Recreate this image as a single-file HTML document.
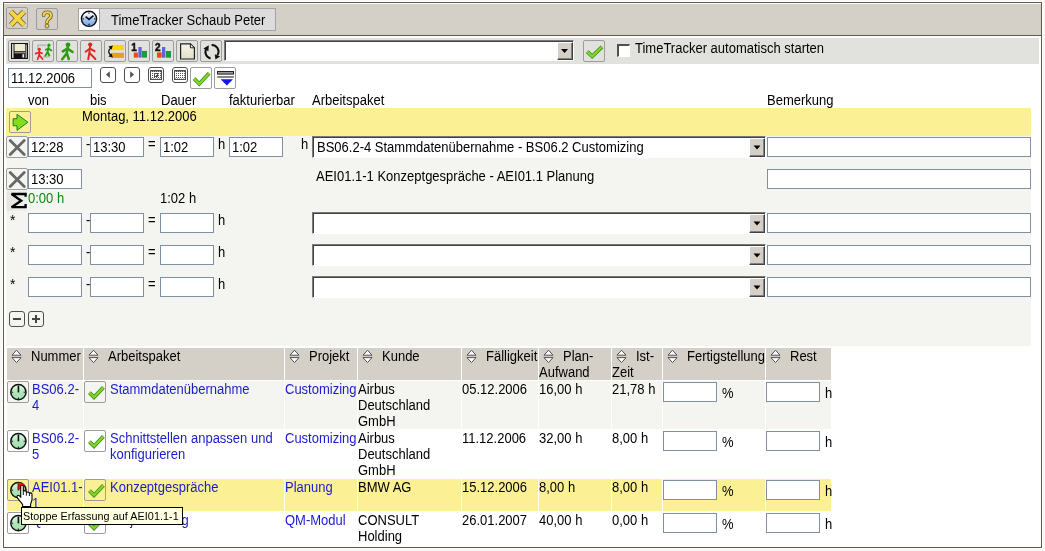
<!DOCTYPE html>
<html><head><meta charset="utf-8"><style>
*{margin:0;padding:0}
html,body{width:1045px;height:551px;overflow:hidden;background:#f7f7f7}
body{position:relative;will-change:transform;font-family:"Liberation Sans",sans-serif;font-size:13px;color:#000}
div,span,svg{position:absolute;box-sizing:border-box}
.t{line-height:16px;white-space:nowrap;font-size:14px;transform:scaleX(0.9286);transform-origin:0 0}
.inp{border:1px solid #7d91a2;background:#fff}
.sel{background:#fff;border:1px solid;border-color:#7a7a7a #fff #fff #7a7a7a;box-shadow:inset 1px 1px 0 #404040}
.dd{background:#d4d0c8;border:1px solid;border-color:#fff #404040 #404040 #fff;box-shadow:inset -1px -1px 0 #808080}
.cb{background:#fff;border-top:2px solid #505050;border-left:2px solid #505050;border-bottom:1px solid #fff;border-right:1px solid #fff}
</style></head>
<body>
<svg width="0" height="0" style="position:absolute"><defs>
<pattern id="dots" x="0" y="0" width="2" height="2" patternUnits="userSpaceOnUse"><rect x="0" y="0" width="1" height="1" fill="#505050"/></pattern>
</defs></svg>
<div style="left:3px;top:2px;width:1039px;height:546px;border:1px solid #5e5a45;background:#fff;box-shadow:0 0 0 1px #fff"></div>
<div style="left:4px;top:4px;width:1037px;height:31px;background:#d4d0c8"></div>
<div style="left:4px;top:35px;width:1037px;height:1px;background:#5e5a45"></div>
<div style="left:6px;top:38px;width:1033px;height:26px;background:#e1e1dd"></div>
<svg style="left:6px;top:7px;" width="22" height="22" viewBox="0 0 22 22"><rect x="0.5" y="0.5" width="21" height="21" rx="1.5" fill="none" stroke="#9c9c9c"/><path d="M4.8 4.6 L18.1 18.1 M18.1 4.6 L4.8 18.1" stroke="#6e6030" stroke-width="5.6"/><path d="M4.8 4.6 L18.1 18.1 M18.1 4.6 L4.8 18.1" stroke="#f6d63c" stroke-width="4"/></svg>
<svg style="left:36px;top:8px;" width="22" height="22" viewBox="0 0 22 22"><rect x="0.5" y="0.5" width="21" height="21" rx="1.5" fill="none" stroke="#9c9c9c"/><g fill="none" stroke-linecap="round" stroke-linejoin="round"><path d="M7.6 7.4 Q7.6 4.2 11.2 4.2 Q15 4.2 15 7.6 Q15 9.8 12.6 11.2 Q11 12.2 11 14.6" stroke="#6e6030" stroke-width="3.6"/><path d="M7.6 7.4 Q7.6 4.2 11.2 4.2 Q15 4.2 15 7.6 Q15 9.8 12.6 11.2 Q11 12.2 11 14.6" stroke="#f6d63c" stroke-width="2"/></g><circle cx="11" cy="18" r="2" fill="#f6d63c" stroke="#6e6030" stroke-width="0.9"/></svg>
<div style="left:78px;top:8px;width:198px;height:23px;border:1px solid #a4a4a4;background:#dcdcdc"></div>
<div style="left:79px;top:9px;width:21px;height:21px;background:#fff;border-right:1px solid #a4a4a4"></div>
<svg style="left:79px;top:9px;" width="21" height="21" viewBox="0 0 21 21"><defs><linearGradient id="cg" x1="0" y1="0" x2="0" y2="1"><stop offset="0.15" stop-color="#fbfdff"/><stop offset="0.55" stop-color="#a8c8f4"/><stop offset="1" stop-color="#6a9eea"/></linearGradient></defs><circle cx="10" cy="9.8" r="7.6" fill="url(#cg)" stroke="#111" stroke-width="1.4"/><path d="M6.6 7.6 L10 10.4 L14.4 6.6" fill="none" stroke="#111" stroke-width="1.7"/><path d="M10 3.4 V4.8 M10 14.8 V16.2 M3.6 9.8 H5 M15 9.8 H16.4" stroke="#222" stroke-width="1.3"/></svg>
<span class="t" style="left:111px;top:12px;">TimeTracker Schaub Peter</span>
<svg style="left:8px;top:40px;" width="22" height="22" viewBox="0 0 22 22"><rect x="0.5" y="0.5" width="21" height="21" rx="1.5" fill="none" stroke="#9c9c9c"/><rect x="3" y="3" width="17" height="16" fill="#111"/><rect x="4" y="4" width="1.6" height="14" fill="#cfcfc4"/><rect x="17.6" y="4.5" width="1.2" height="13.5" fill="#c8c8b8"/><rect x="6.5" y="4" width="10.5" height="7.2" fill="#f0ecd2"/><rect x="6.5" y="12.3" width="10.5" height="1" fill="#bdbdb0"/><rect x="14.4" y="14.2" width="1.8" height="3.4" fill="#e8e8e8"/></svg>
<svg style="left:32px;top:40px;" width="22" height="22" viewBox="0 0 22 22"><rect x="0.5" y="0.5" width="21" height="21" rx="1.5" fill="none" stroke="#9c9c9c"/><path d="M6 10 V5.3 H14.2 M10.8 16.8 H16.2 V12.5" stroke="#c0c0c0" stroke-width="2" fill="none"/><g fill="none" stroke="#2a9a10" stroke-width="1.7" stroke-linecap="round" stroke-linejoin="round"><path d="M16.6 7 L15.6 12"/><path d="M15.6 12 L13.3 15.8 M15.6 12 L17.4 15.6"/><path d="M13.8 9.8 L16.4 8.6 L19.4 10.4"/></g><circle cx="16.9" cy="5.2" r="1.6" fill="#2a9a10"/><g fill="none" stroke="#e02828" stroke-width="1.7" stroke-linecap="round" stroke-linejoin="round"><path d="M7.3 11 L7.2 15"/><path d="M7.2 15 L5.6 19.2 M7.2 15 L10.6 19"/><path d="M3.6 13.6 L7.3 12.2 L10 13.4"/></g><circle cx="7.3" cy="9.3" r="1.6" fill="#e02828"/></svg>
<svg style="left:56px;top:40px;" width="22" height="22" viewBox="0 0 22 22"><rect x="0.5" y="0.5" width="21" height="21" rx="1.5" fill="none" stroke="#9c9c9c"/><g fill="none" stroke="#2f9a12" stroke-width="2.5" stroke-linecap="round" stroke-linejoin="round"><path d="M11.8 7 L10.8 13.2"/><path d="M10.8 13.2 L6.2 19.2 M10.8 13.2 L12.8 19"/><path d="M6.8 11.4 L11.4 8.6 L16.6 12"/></g><circle cx="12" cy="4.8" r="2.4" fill="#2f9a12"/></svg>
<svg style="left:80px;top:40px;" width="22" height="22" viewBox="0 0 22 22"><rect x="0.5" y="0.5" width="21" height="21" rx="1.5" fill="none" stroke="#9c9c9c"/><g fill="none" stroke="#e02424" stroke-width="1.9" stroke-linecap="round" stroke-linejoin="round"><path d="M10 6.5 L9.4 13"/><path d="M9.4 13 L8.2 19.3 M9.4 13 L12 15.5 L15.4 19"/><path d="M5.6 11.8 L10 8.6 L14.6 11.2"/></g><circle cx="10.2" cy="4.6" r="2.1" fill="#e02424"/></svg>
<svg style="left:104px;top:40px;" width="22" height="22" viewBox="0 0 22 22"><rect x="0.5" y="0.5" width="21" height="21" rx="1.5" fill="none" stroke="#9c9c9c"/><rect x="7.8" y="4.9" width="12.2" height="5.3" fill="#f8d800"/><rect x="7.8" y="12.8" width="12.2" height="5.1" fill="#daa424"/><path d="M6.8 8 Q2.6 11.5 6.8 15" fill="none" stroke="#111" stroke-width="1.3"/><path d="M4.4 6.4 L8.8 5.6 L7.6 9.8 Z M4.4 16.6 L8.8 17.4 L7.6 13.2 Z" fill="#111"/></svg>
<svg style="left:128px;top:40px;" width="22" height="22" viewBox="0 0 22 22"><rect x="0.5" y="0.5" width="21" height="21" rx="1.5" fill="none" stroke="#9c9c9c"/><text x="3.2" y="11.2" font-family="Liberation Sans" font-weight="bold" font-size="10" fill="#111" stroke="#111" stroke-width="0.5">1</text><rect x="5.8" y="12.6" width="4.1" height="5" fill="#f04a10"/><rect x="10.4" y="7" width="3.3" height="10.6" fill="#6a5ee0"/><rect x="14" y="10.9" width="5" height="6.7" fill="#1e9a3c"/></svg>
<svg style="left:152px;top:40px;" width="22" height="22" viewBox="0 0 22 22"><rect x="0.5" y="0.5" width="21" height="21" rx="1.5" fill="none" stroke="#9c9c9c"/><text x="3" y="11.2" font-family="Liberation Sans" font-weight="bold" font-size="10" fill="#111" stroke="#111" stroke-width="0.5">2</text><rect x="5" y="12.4" width="4.7" height="5.3" fill="#f04a10"/><rect x="10" y="7" width="3.3" height="10.7" fill="#6a5ee0"/><rect x="13.8" y="11" width="5.2" height="6.7" fill="#1e9a3c"/></svg>
<svg style="left:176px;top:40px;" width="22" height="22" viewBox="0 0 22 22"><rect x="0.5" y="0.5" width="21" height="21" rx="1.5" fill="none" stroke="#9c9c9c"/><defs><linearGradient id="dg" x1="0" y1="0" x2="0" y2="1"><stop offset="0" stop-color="#f6f4e8"/><stop offset="1" stop-color="#e2dec6"/></linearGradient></defs><path d="M4.6 3.8 H14.4 L18.4 7.8 V19 H4.6 Z" fill="url(#dg)" stroke="#222" stroke-width="1.2"/><path d="M14.4 3.8 V7.8 H18.4 Z" fill="#fff" stroke="#222" stroke-width="1"/></svg>
<svg style="left:200px;top:40px;" width="22" height="22" viewBox="0 0 22 22"><rect x="0.5" y="0.5" width="21" height="21" rx="1.5" fill="none" stroke="#9c9c9c"/><g fill="none" stroke="#111" stroke-width="2"><path d="M11.6 5 A6.6 6.6 0 0 1 17.4 15.2"/><path d="M10.6 18.4 A6.6 6.6 0 0 1 6.6 8.2"/></g><path d="M3.4 8.6 L8.8 5.2 L8.4 11.2 Z M14.8 14.2 L20.2 16.4 L15.4 19.4 Z" fill="#111"/></svg>
<div class="sel" style="left:224px;top:40px;width:350px;height:21px;"></div>
<div class="dd" style="left:557px;top:42px;width:16px;height:18px;"></div>
<svg style="left:557px;top:42px;" width="16" height="18" viewBox="0 0 16 18"><path d="M4 7 H11 L7.5 11 Z" fill="#000"/></svg>
<svg style="left:583px;top:40px;" width="22" height="22" viewBox="0 0 22 22"><rect x="0.5" y="0.5" width="21" height="21" rx="1.5" fill="none" stroke="#9c9c9c"/><path d="M4.2 11.6 L9.2 16.4 L19 6.8" fill="none" stroke="#3a8a1a" stroke-width="3.8" stroke-linejoin="miter" stroke-linecap="butt"/><path d="M4.2 11.6 L9.2 16.4 L19 6.8" fill="none" stroke="#84d628" stroke-width="2.3" stroke-linejoin="miter" stroke-linecap="butt"/></svg>
<div class="cb" style="left:617px;top:44px;width:13px;height:13px;"></div>
<span class="t" style="left:635px;top:40px;">TimeTracker automatisch starten</span>
<div class="inp" style="left:8px;top:68px;width:84px;height:20px;"></div>
<span class="t" style="left:11px;top:70px;">11.12.2006</span>
<svg style="left:100px;top:67px;" width="16" height="16" viewBox="0 0 16 16"><rect x="0.5" y="0.5" width="15" height="15" rx="2.5" fill="#fff" stroke="#505050"/><path d="M6 7.5 L9.8 4.2 V11 Z" fill="#505050"/></svg>
<svg style="left:124px;top:67px;" width="16" height="16" viewBox="0 0 16 16"><rect x="0.5" y="0.5" width="15" height="15" rx="2.5" fill="#fff" stroke="#505050"/><path d="M10 7.5 L6.2 4.2 V11 Z" fill="#505050"/></svg>
<svg style="left:148px;top:67px;" width="16" height="16" viewBox="0 0 16 16"><rect x="0.5" y="0.5" width="15" height="15" rx="2.5" fill="#fff" stroke="#505050"/><rect x="2.5" y="3.5" width="11" height="9" fill="#fff" stroke="#505050"/><path d="M3 4 H13 M3 12 H13" stroke="#505050" stroke-width="1" stroke-dasharray="1 1"/><rect x="3" y="4" width="10" height="8" fill="url(#dots)"/><rect x="6.5" y="6.5" width="3" height="3" fill="none" stroke="#505050"/></svg>
<svg style="left:172px;top:67px;" width="16" height="16" viewBox="0 0 16 16"><rect x="0.5" y="0.5" width="15" height="15" rx="2.5" fill="#fff" stroke="#505050"/><rect x="2.5" y="3.5" width="11" height="9" fill="#fff" stroke="#505050"/><path d="M3 4 H13 M3 12 H13" stroke="#505050" stroke-width="1" stroke-dasharray="1 1"/><rect x="3" y="4" width="10" height="8" fill="url(#dots)"/></svg>
<svg style="left:190px;top:67px;" width="22" height="22" viewBox="0 0 22 22"><rect x="0" y="0" width="22" height="22" fill="#fff"/><rect x="0.5" y="0.5" width="21" height="21" rx="1.5" fill="none" stroke="#9c9c9c"/><path d="M4 11.6 L9.3 16.8 L19.2 6.2" fill="none" stroke="#3a8a1a" stroke-width="3.8" stroke-linejoin="miter" stroke-linecap="butt"/><path d="M4 11.6 L9.3 16.8 L19.2 6.2" fill="none" stroke="#84d628" stroke-width="2.3" stroke-linejoin="miter" stroke-linecap="butt"/></svg>
<svg style="left:214px;top:67px;" width="22" height="22" viewBox="0 0 22 22"><rect x="0" y="0" width="22" height="22" fill="#fff"/><rect x="0.5" y="0.5" width="21" height="21" rx="1.5" fill="none" stroke="#9c9c9c"/><rect x="3.5" y="4.5" width="16" height="2.6" fill="#9a9a9a" stroke="#222" stroke-width="1"/><rect x="3.2" y="9.2" width="16.7" height="1.6" fill="#6a6a6a"/><path d="M6.6 12.2 H19 L12.9 18.6 Z" fill="#1414f0"/></svg>
<span class="t" style="left:28px;top:92px;">von</span>
<span class="t" style="left:90px;top:92px;">bis</span>
<span class="t" style="left:161px;top:92px;">Dauer</span>
<span class="t" style="left:229px;top:92px;">fakturierbar</span>
<span class="t" style="left:312px;top:92px;">Arbeitspaket</span>
<span class="t" style="left:767px;top:92px;">Bemerkung</span>
<div style="left:6px;top:108px;width:1025px;height:28px;background:#fbf194"></div>
<svg style="left:9px;top:111px;" width="22" height="22" viewBox="0 0 22 22"><rect x="0.5" y="0.5" width="21" height="21" rx="1.5" fill="none" stroke="#9c9c9c"/><path d="M4.1 7.7 H8 V3.3 L18.9 11.2 L8 19.4 V14.8 H4.1 Z" fill="#84dc1c" stroke="#1f7f1f" stroke-width="1"/></svg>
<span class="t" style="left:82px;top:108px;">Montag, 11.12.2006</span>
<div style="left:6px;top:136px;width:1025px;height:210px;background:#f4f4f0"></div>
<svg style="left:6px;top:136px;" width="22" height="22" viewBox="0 0 22 22"><rect x="0.5" y="0.5" width="21" height="21" rx="1.5" fill="none" stroke="#9c9c9c"/><path d="M4.2 4.6 L18.2 18.4 M18.2 4.6 L4.2 18.4" stroke="#686868" stroke-width="2.8" stroke-linecap="round"/></svg>
<div class="inp" style="left:28px;top:137px;width:54px;height:20px;"></div>
<span class="t" style="left:86px;top:136px;">-</span>
<div class="inp" style="left:90px;top:137px;width:54px;height:20px;"></div>
<span class="t" style="left:148px;top:136px;">=</span>
<div class="inp" style="left:160px;top:137px;width:54px;height:20px;"></div>
<span class="t" style="left:218px;top:136px;">h</span>
<span class="t" style="left:31px;top:139px;">12:28</span>
<span class="t" style="left:93px;top:139px;">13:30</span>
<span class="t" style="left:163px;top:139px;">1:02</span>
<div class="inp" style="left:229px;top:137px;width:54px;height:20px;"></div>
<span class="t" style="left:232px;top:139px;">1:02</span>
<span class="t" style="left:301px;top:136px;">h</span>
<div class="sel" style="left:312px;top:136px;width:454px;height:22px;"></div>
<div class="dd" style="left:749px;top:138px;width:16px;height:19px;"></div>
<svg style="left:749px;top:138px;" width="16" height="19" viewBox="0 0 16 19"><path d="M4.5 7.5 H11.5 L8 11.5 Z" fill="#000"/></svg>
<span class="t" style="left:317px;top:139px;">BS06.2-4 Stammdatenübernahme - BS06.2 Customizing</span>
<div class="inp" style="left:767px;top:137px;width:264px;height:20px;"></div>
<svg style="left:6px;top:168px;" width="22" height="22" viewBox="0 0 22 22"><rect x="0.5" y="0.5" width="21" height="21" rx="1.5" fill="none" stroke="#9c9c9c"/><path d="M4.2 4.6 L18.2 18.4 M18.2 4.6 L4.2 18.4" stroke="#686868" stroke-width="2.8" stroke-linecap="round"/></svg>
<div class="inp" style="left:28px;top:169px;width:54px;height:20px;"></div>
<span class="t" style="left:31px;top:171px;">13:30</span>
<span class="t" style="left:316px;top:168px;">AEI01.1-1 Konzeptgespräche - AEI01.1 Planung</span>
<div class="inp" style="left:767px;top:169px;width:264px;height:20px;"></div>
<svg style="left:6px;top:190px;" width="22" height="22" viewBox="0 0 22 22"><path d="M0.5 1 H6 L13 10.5 L6 21 H0.5 Z" fill="#e6e6e2"/><path d="M6 1 H21 V21 H6 L13 10.5 Z" fill="#ededea"/><path d="M19.6 6.8 V4 H5.6 L15.2 10.8 L5.6 17.2 H19.6 V14" fill="none" stroke="#000" stroke-width="2.3" stroke-linejoin="miter" stroke-miterlimit="3"/></svg>
<span class="t" style="left:28px;top:190px;color:#118811">0:00 h</span>
<span class="t" style="left:160px;top:190px;">1:02 h</span>
<span class="t" style="left:10px;top:212px;font-size:15px">*</span>
<div class="inp" style="left:28px;top:213px;width:54px;height:20px;"></div>
<span class="t" style="left:86px;top:212px;">-</span>
<div class="inp" style="left:90px;top:213px;width:54px;height:20px;"></div>
<span class="t" style="left:148px;top:212px;">=</span>
<div class="inp" style="left:160px;top:213px;width:54px;height:20px;"></div>
<span class="t" style="left:218px;top:212px;">h</span>
<div class="sel" style="left:312px;top:212px;width:454px;height:22px;"></div>
<div class="dd" style="left:749px;top:214px;width:16px;height:19px;"></div>
<svg style="left:749px;top:214px;" width="16" height="19" viewBox="0 0 16 19"><path d="M4.5 7.5 H11.5 L8 11.5 Z" fill="#000"/></svg>
<div class="inp" style="left:767px;top:213px;width:264px;height:20px;"></div>
<span class="t" style="left:10px;top:244px;font-size:15px">*</span>
<div class="inp" style="left:28px;top:245px;width:54px;height:20px;"></div>
<span class="t" style="left:86px;top:244px;">-</span>
<div class="inp" style="left:90px;top:245px;width:54px;height:20px;"></div>
<span class="t" style="left:148px;top:244px;">=</span>
<div class="inp" style="left:160px;top:245px;width:54px;height:20px;"></div>
<span class="t" style="left:218px;top:244px;">h</span>
<div class="sel" style="left:312px;top:244px;width:454px;height:22px;"></div>
<div class="dd" style="left:749px;top:246px;width:16px;height:19px;"></div>
<svg style="left:749px;top:246px;" width="16" height="19" viewBox="0 0 16 19"><path d="M4.5 7.5 H11.5 L8 11.5 Z" fill="#000"/></svg>
<div class="inp" style="left:767px;top:245px;width:264px;height:20px;"></div>
<span class="t" style="left:10px;top:276px;font-size:15px">*</span>
<div class="inp" style="left:28px;top:277px;width:54px;height:20px;"></div>
<span class="t" style="left:86px;top:276px;">-</span>
<div class="inp" style="left:90px;top:277px;width:54px;height:20px;"></div>
<span class="t" style="left:148px;top:276px;">=</span>
<div class="inp" style="left:160px;top:277px;width:54px;height:20px;"></div>
<span class="t" style="left:218px;top:276px;">h</span>
<div class="sel" style="left:312px;top:276px;width:454px;height:22px;"></div>
<div class="dd" style="left:749px;top:278px;width:16px;height:19px;"></div>
<svg style="left:749px;top:278px;" width="16" height="19" viewBox="0 0 16 19"><path d="M4.5 7.5 H11.5 L8 11.5 Z" fill="#000"/></svg>
<div class="inp" style="left:767px;top:277px;width:264px;height:20px;"></div>
<svg style="left:9px;top:311px;" width="16" height="16" viewBox="0 0 16 16"><rect x="0.5" y="0.5" width="15" height="15" rx="2.5" fill="#f4f4f0" stroke="#505050"/><rect x="4" y="7" width="8" height="2" fill="#444"/></svg>
<svg style="left:28px;top:311px;" width="16" height="16" viewBox="0 0 16 16"><rect x="0.5" y="0.5" width="15" height="15" rx="2.5" fill="#f4f4f0" stroke="#505050"/><rect x="4" y="7" width="8" height="2" fill="#444"/><rect x="7" y="4" width="2" height="8" fill="#444"/></svg>
<div style="left:7px;top:348px;width:76px;height:32px;background:#d4d0c8"></div>
<div style="left:84px;top:348px;width:200px;height:32px;background:#d4d0c8"></div>
<div style="left:285px;top:348px;width:72px;height:32px;background:#d4d0c8"></div>
<div style="left:358px;top:348px;width:103px;height:32px;background:#d4d0c8"></div>
<div style="left:462px;top:348px;width:76px;height:32px;background:#d4d0c8"></div>
<div style="left:539px;top:348px;width:72px;height:32px;background:#d4d0c8"></div>
<div style="left:612px;top:348px;width:50px;height:32px;background:#d4d0c8"></div>
<div style="left:663px;top:348px;width:102px;height:32px;background:#d4d0c8"></div>
<div style="left:766px;top:348px;width:65px;height:32px;background:#d4d0c8"></div>
<div style="left:7px;top:381px;width:76px;height:48px;background:#f4f4f0"></div>
<div style="left:84px;top:381px;width:200px;height:48px;background:#f4f4f0"></div>
<div style="left:285px;top:381px;width:72px;height:48px;background:#f4f4f0"></div>
<div style="left:358px;top:381px;width:103px;height:48px;background:#f4f4f0"></div>
<div style="left:462px;top:381px;width:76px;height:48px;background:#f4f4f0"></div>
<div style="left:539px;top:381px;width:72px;height:48px;background:#f4f4f0"></div>
<div style="left:612px;top:381px;width:50px;height:48px;background:#f4f4f0"></div>
<div style="left:663px;top:381px;width:102px;height:48px;background:#f4f4f0"></div>
<div style="left:766px;top:381px;width:65px;height:48px;background:#f4f4f0"></div>
<div style="left:7px;top:430px;width:76px;height:48px;background:#fff"></div>
<div style="left:84px;top:430px;width:200px;height:48px;background:#fff"></div>
<div style="left:285px;top:430px;width:72px;height:48px;background:#fff"></div>
<div style="left:358px;top:430px;width:103px;height:48px;background:#fff"></div>
<div style="left:462px;top:430px;width:76px;height:48px;background:#fff"></div>
<div style="left:539px;top:430px;width:72px;height:48px;background:#fff"></div>
<div style="left:612px;top:430px;width:50px;height:48px;background:#fff"></div>
<div style="left:663px;top:430px;width:102px;height:48px;background:#fff"></div>
<div style="left:766px;top:430px;width:65px;height:48px;background:#fff"></div>
<div style="left:7px;top:479px;width:76px;height:32px;background:#fbf194"></div>
<div style="left:84px;top:479px;width:200px;height:32px;background:#fbf194"></div>
<div style="left:285px;top:479px;width:72px;height:32px;background:#fbf194"></div>
<div style="left:358px;top:479px;width:103px;height:32px;background:#fbf194"></div>
<div style="left:462px;top:479px;width:76px;height:32px;background:#fbf194"></div>
<div style="left:539px;top:479px;width:72px;height:32px;background:#fbf194"></div>
<div style="left:612px;top:479px;width:50px;height:32px;background:#fbf194"></div>
<div style="left:663px;top:479px;width:102px;height:32px;background:#fbf194"></div>
<div style="left:766px;top:479px;width:65px;height:32px;background:#fbf194"></div>
<div style="left:7px;top:512px;width:76px;height:33px;background:#fff"></div>
<div style="left:84px;top:512px;width:200px;height:33px;background:#fff"></div>
<div style="left:285px;top:512px;width:72px;height:33px;background:#fff"></div>
<div style="left:358px;top:512px;width:103px;height:33px;background:#fff"></div>
<div style="left:462px;top:512px;width:76px;height:33px;background:#fff"></div>
<div style="left:539px;top:512px;width:72px;height:33px;background:#fff"></div>
<div style="left:612px;top:512px;width:50px;height:33px;background:#fff"></div>
<div style="left:663px;top:512px;width:102px;height:33px;background:#fff"></div>
<div style="left:766px;top:512px;width:65px;height:33px;background:#fff"></div>
<svg style="left:11px;top:349px;" width="11" height="15" viewBox="0 0 11 15"><path d="M1 6.2 L5.5 1.2 L10 6.2 Z M1 8.6 L5.5 13.6 L10 8.6 Z" fill="#fff" stroke="#505050" stroke-width="1"/></svg>
<span class="t" style="left:31px;top:348px;">Nummer</span>
<svg style="left:88px;top:349px;" width="11" height="15" viewBox="0 0 11 15"><path d="M1 6.2 L5.5 1.2 L10 6.2 Z M1 8.6 L5.5 13.6 L10 8.6 Z" fill="#fff" stroke="#505050" stroke-width="1"/></svg>
<span class="t" style="left:108px;top:348px;">Arbeitspaket</span>
<svg style="left:289px;top:349px;" width="11" height="15" viewBox="0 0 11 15"><path d="M1 6.2 L5.5 1.2 L10 6.2 Z M1 8.6 L5.5 13.6 L10 8.6 Z" fill="#fff" stroke="#505050" stroke-width="1"/></svg>
<span class="t" style="left:309px;top:348px;">Projekt</span>
<svg style="left:362px;top:349px;" width="11" height="15" viewBox="0 0 11 15"><path d="M1 6.2 L5.5 1.2 L10 6.2 Z M1 8.6 L5.5 13.6 L10 8.6 Z" fill="#fff" stroke="#505050" stroke-width="1"/></svg>
<span class="t" style="left:382px;top:348px;">Kunde</span>
<svg style="left:466px;top:349px;" width="11" height="15" viewBox="0 0 11 15"><path d="M1 6.2 L5.5 1.2 L10 6.2 Z M1 8.6 L5.5 13.6 L10 8.6 Z" fill="#fff" stroke="#505050" stroke-width="1"/></svg>
<span class="t" style="left:486px;top:348px;">Fälligkeit</span>
<svg style="left:543px;top:349px;" width="11" height="15" viewBox="0 0 11 15"><path d="M1 6.2 L5.5 1.2 L10 6.2 Z M1 8.6 L5.5 13.6 L10 8.6 Z" fill="#fff" stroke="#505050" stroke-width="1"/></svg>
<span class="t" style="left:563px;top:348px;">Plan-</span>
<span class="t" style="left:539px;top:364px;">Aufwand</span>
<svg style="left:616px;top:349px;" width="11" height="15" viewBox="0 0 11 15"><path d="M1 6.2 L5.5 1.2 L10 6.2 Z M1 8.6 L5.5 13.6 L10 8.6 Z" fill="#fff" stroke="#505050" stroke-width="1"/></svg>
<span class="t" style="left:636px;top:348px;">Ist-</span>
<span class="t" style="left:612px;top:364px;">Zeit</span>
<svg style="left:667px;top:349px;" width="11" height="15" viewBox="0 0 11 15"><path d="M1 6.2 L5.5 1.2 L10 6.2 Z M1 8.6 L5.5 13.6 L10 8.6 Z" fill="#fff" stroke="#505050" stroke-width="1"/></svg>
<span class="t" style="left:687px;top:348px;">Fertigstellung</span>
<svg style="left:770px;top:349px;" width="11" height="15" viewBox="0 0 11 15"><path d="M1 6.2 L5.5 1.2 L10 6.2 Z M1 8.6 L5.5 13.6 L10 8.6 Z" fill="#fff" stroke="#505050" stroke-width="1"/></svg>
<span class="t" style="left:790px;top:348px;">Rest</span>
<svg style="left:7px;top:381px;" width="22" height="22" viewBox="0 0 22 22"><rect x="0.5" y="0.5" width="21" height="21" rx="1.5" fill="none" stroke="#9c9c9c"/><defs><linearGradient id="gg" x1="0" y1="0" x2="0" y2="1"><stop offset="0" stop-color="#e4f6e8"/><stop offset="0.6" stop-color="#a8e4b4"/></linearGradient></defs><circle cx="11.4" cy="11.2" r="7.6" fill="url(#gg)" stroke="#111" stroke-width="1.5"/><path d="M11.4 4.6 V11.4" stroke="#111" stroke-width="1.6"/><path d="M11.4 16.6 V18.2 M4.6 11.2 H6.2 M16.6 11.2 H18.2" stroke="#222" stroke-width="1.1"/></svg>
<span class="t" style="left:32px;top:381px;color:#1c1ccc">BS06.2-</span>
<span class="t" style="left:32px;top:397px;color:#1c1ccc">4</span>
<svg style="left:84px;top:381px;" width="22" height="22" viewBox="0 0 22 22"><rect x="0.5" y="0.5" width="21" height="21" rx="1.5" fill="none" stroke="#9c9c9c"/><path d="M5.4 11.6 L10 16.2 L19.4 6.4" fill="none" stroke="#3a8a1a" stroke-width="3.8" stroke-linejoin="miter" stroke-linecap="butt"/><path d="M5.4 11.6 L10 16.2 L19.4 6.4" fill="none" stroke="#84d628" stroke-width="2.3" stroke-linejoin="miter" stroke-linecap="butt"/></svg>
<span class="t" style="left:110px;top:381px;color:#1c1ccc">Stammdatenübernahme</span>
<span class="t" style="left:285px;top:381px;color:#1c1ccc">Customizing</span>
<span class="t" style="left:358px;top:381px;">Airbus</span>
<span class="t" style="left:358px;top:397px;">Deutschland</span>
<span class="t" style="left:358px;top:413px;">GmbH</span>
<span class="t" style="left:462px;top:381px;">05.12.2006</span>
<span class="t" style="left:539px;top:381px;">16,00 h</span>
<span class="t" style="left:612px;top:381px;">21,78 h</span>
<div class="inp" style="left:663px;top:382px;width:54px;height:20px;"></div>
<span class="t" style="left:722px;top:385px;">%</span>
<div class="inp" style="left:766px;top:382px;width:54px;height:20px;"></div>
<span class="t" style="left:825px;top:385px;">h</span>
<svg style="left:7px;top:430px;" width="22" height="22" viewBox="0 0 22 22"><rect x="0.5" y="0.5" width="21" height="21" rx="1.5" fill="none" stroke="#9c9c9c"/><defs><linearGradient id="gg" x1="0" y1="0" x2="0" y2="1"><stop offset="0" stop-color="#e4f6e8"/><stop offset="0.6" stop-color="#a8e4b4"/></linearGradient></defs><circle cx="11.4" cy="11.2" r="7.6" fill="url(#gg)" stroke="#111" stroke-width="1.5"/><path d="M11.4 4.6 V11.4" stroke="#111" stroke-width="1.6"/><path d="M11.4 16.6 V18.2 M4.6 11.2 H6.2 M16.6 11.2 H18.2" stroke="#222" stroke-width="1.1"/></svg>
<span class="t" style="left:32px;top:430px;color:#1c1ccc">BS06.2-</span>
<span class="t" style="left:32px;top:446px;color:#1c1ccc">5</span>
<svg style="left:84px;top:430px;" width="22" height="22" viewBox="0 0 22 22"><rect x="0.5" y="0.5" width="21" height="21" rx="1.5" fill="none" stroke="#9c9c9c"/><path d="M5.4 11.6 L10 16.2 L19.4 6.4" fill="none" stroke="#3a8a1a" stroke-width="3.8" stroke-linejoin="miter" stroke-linecap="butt"/><path d="M5.4 11.6 L10 16.2 L19.4 6.4" fill="none" stroke="#84d628" stroke-width="2.3" stroke-linejoin="miter" stroke-linecap="butt"/></svg>
<span class="t" style="left:110px;top:430px;color:#1c1ccc">Schnittstellen anpassen und</span>
<span class="t" style="left:110px;top:446px;color:#1c1ccc">konfigurieren</span>
<span class="t" style="left:285px;top:430px;color:#1c1ccc">Customizing</span>
<span class="t" style="left:358px;top:430px;">Airbus</span>
<span class="t" style="left:358px;top:446px;">Deutschland</span>
<span class="t" style="left:358px;top:462px;">GmbH</span>
<span class="t" style="left:462px;top:430px;">11.12.2006</span>
<span class="t" style="left:539px;top:430px;">32,00 h</span>
<span class="t" style="left:612px;top:430px;">8,00 h</span>
<div class="inp" style="left:663px;top:431px;width:54px;height:20px;"></div>
<span class="t" style="left:722px;top:434px;">%</span>
<div class="inp" style="left:766px;top:431px;width:54px;height:20px;"></div>
<span class="t" style="left:825px;top:434px;">h</span>
<svg style="left:7px;top:479px;" width="22" height="22" viewBox="0 0 22 22"><rect x="0.5" y="0.5" width="21" height="21" rx="1.5" fill="none" stroke="#9c9c9c"/><defs><linearGradient id="gg" x1="0" y1="0" x2="0" y2="1"><stop offset="0" stop-color="#e4f6e8"/><stop offset="0.6" stop-color="#a8e4b4"/></linearGradient></defs><circle cx="11.4" cy="11.2" r="7.6" fill="url(#gg)" stroke="#111" stroke-width="1.5"/><path d="M11.4 4.6 V11.4" stroke="#111" stroke-width="1.6"/><path d="M11.4 16.6 V18.2 M4.6 11.2 H6.2 M16.6 11.2 H18.2" stroke="#222" stroke-width="1.1"/><path d="M11.4 11.2 V3.6 A7.6 7.6 0 0 1 17.6 6.8 Z" fill="#ff1010"/></svg>
<span class="t" style="left:32px;top:479px;color:#1c1ccc">AEI01.1-</span>
<span class="t" style="left:32px;top:495px;color:#1c1ccc">1</span>
<svg style="left:84px;top:479px;" width="22" height="22" viewBox="0 0 22 22"><rect x="0.5" y="0.5" width="21" height="21" rx="1.5" fill="none" stroke="#9c9c9c"/><path d="M5.4 11.6 L10 16.2 L19.4 6.4" fill="none" stroke="#3a8a1a" stroke-width="3.8" stroke-linejoin="miter" stroke-linecap="butt"/><path d="M5.4 11.6 L10 16.2 L19.4 6.4" fill="none" stroke="#84d628" stroke-width="2.3" stroke-linejoin="miter" stroke-linecap="butt"/></svg>
<span class="t" style="left:110px;top:479px;color:#1c1ccc">Konzeptgespräche</span>
<span class="t" style="left:285px;top:479px;color:#1c1ccc">Planung</span>
<span class="t" style="left:358px;top:479px;">BMW AG</span>
<span class="t" style="left:462px;top:479px;">15.12.2006</span>
<span class="t" style="left:539px;top:479px;">8,00 h</span>
<span class="t" style="left:612px;top:479px;">8,00 h</span>
<div class="inp" style="left:663px;top:480px;width:54px;height:20px;"></div>
<span class="t" style="left:722px;top:483px;">%</span>
<div class="inp" style="left:766px;top:480px;width:54px;height:20px;"></div>
<span class="t" style="left:825px;top:483px;">h</span>
<svg style="left:7px;top:512px;" width="22" height="22" viewBox="0 0 22 22"><rect x="0.5" y="0.5" width="21" height="21" rx="1.5" fill="none" stroke="#9c9c9c"/><defs><linearGradient id="gg" x1="0" y1="0" x2="0" y2="1"><stop offset="0" stop-color="#e4f6e8"/><stop offset="0.6" stop-color="#a8e4b4"/></linearGradient></defs><circle cx="11.4" cy="11.2" r="7.6" fill="url(#gg)" stroke="#111" stroke-width="1.5"/><path d="M11.4 4.6 V11.4" stroke="#111" stroke-width="1.6"/><path d="M11.4 16.6 V18.2 M4.6 11.2 H6.2 M16.6 11.2 H18.2" stroke="#222" stroke-width="1.1"/></svg>
<span class="t" style="left:32px;top:512px;color:#1c1ccc">QS01</span>
<svg style="left:84px;top:512px;" width="22" height="22" viewBox="0 0 22 22"><rect x="0.5" y="0.5" width="21" height="21" rx="1.5" fill="none" stroke="#9c9c9c"/><path d="M5.4 11.6 L10 16.2 L19.4 6.4" fill="none" stroke="#3a8a1a" stroke-width="3.8" stroke-linejoin="miter" stroke-linecap="butt"/><path d="M5.4 11.6 L10 16.2 L19.4 6.4" fill="none" stroke="#84d628" stroke-width="2.3" stroke-linejoin="miter" stroke-linecap="butt"/></svg>
<span class="t" style="left:110px;top:512px;color:#1c1ccc">Projektleitung</span>
<span class="t" style="left:285px;top:512px;color:#1c1ccc">QM-Modul</span>
<span class="t" style="left:358px;top:512px;">CONSULT</span>
<span class="t" style="left:358px;top:528px;">Holding</span>
<span class="t" style="left:462px;top:512px;">26.01.2007</span>
<span class="t" style="left:539px;top:512px;">40,00 h</span>
<span class="t" style="left:612px;top:512px;">0,00 h</span>
<div class="inp" style="left:663px;top:513px;width:54px;height:20px;"></div>
<span class="t" style="left:722px;top:516px;">%</span>
<div class="inp" style="left:766px;top:513px;width:54px;height:20px;"></div>
<span class="t" style="left:825px;top:516px;">h</span>
<svg style="left:14px;top:483px;" width="22" height="26" viewBox="0 0 22 26"><path d="M6.7 3.6 Q6.7 2.2 8 2.2 Q9.3 2.2 9.3 3.6 V8.6 Q9.6 7.8 10.9 7.8 Q12.3 7.8 12.4 9 V9.8 Q12.8 9 13.9 9 Q15.3 9 15.4 10.2 V10.8 Q15.8 9.9 16.7 9.9 Q18 9.9 18 11.2 V17 L16.6 21 V23.6 H8.6 V21.5 L3.6 15.2 Q2.4 13.6 3.3 12.6 Q4.2 11.8 5.6 13 L6.7 14.2 Z" fill="#fff" stroke="#000" stroke-width="1.1"/><path d="M9.3 8.6 V12 M12.4 9.8 V12.6 M15.4 10.8 V13" stroke="#000" stroke-width="0.9"/></svg>
<div style="left:21px;top:507px;width:162px;height:18px;background:#ffffe1;border:1px solid #000"></div>
<span style="left:23px;top:508px;font-size:10.8px;line-height:16px;letter-spacing:0.05px;white-space:nowrap">Stoppe Erfassung auf AEI01.1-1</span>
</body></html>
